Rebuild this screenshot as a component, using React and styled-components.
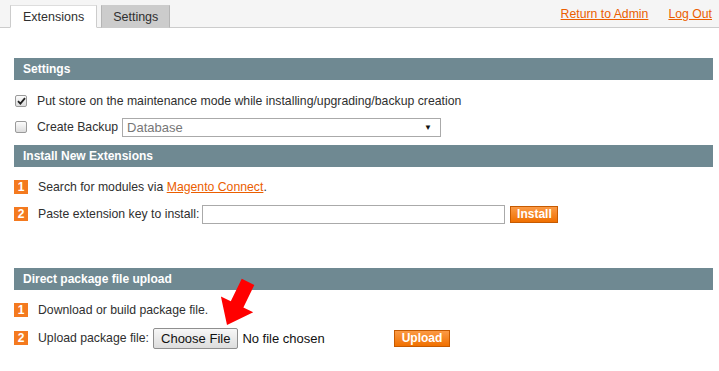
import React from "react";
import styled, { createGlobalStyle } from "styled-components";

const colors = {
  text: "#2f2f2f",
  link: "#eb5e00",
  header: "#6f8992",
  badge: "#f47a1f",
  border: "#aaaaaa",
};

const GlobalStyle = createGlobalStyle`
  body {
    margin: 0;
    background: #ffffff;
    font-family: "Liberation Sans", Arial, sans-serif;
    font-size: 12.25px;
    color: ${colors.text};
  }
`;

function App() {
  return (
    <Page>
      <GlobalStyle />
      <TopBar>
        <Tabs>
          <Tab $active>Extensions</Tab>
          <Tab>Settings</Tab>
        </Tabs>
        <TopLinks>
          <Link href="#">Return to Admin</Link>
          <Link href="#">Log Out</Link>
        </TopLinks>
      </TopBar>

      <Content>
        <SectionHeader>Settings</SectionHeader>
        <SectionBody $top={11} $bottom={8} $gap={6}>
          <Row>
            <Checkbox $checked>
              <svg width="9" height="8" viewBox="0 0 9 8">
                <path d="M1 4.2 L3.4 6.6 L8 1.2" fill="none" stroke="#222" strokeWidth="1.8" />
              </svg>
            </Checkbox>
            Put store on the maintenance mode while installing/upgrading/backup creation
          </Row>
          <Row>
            <Checkbox />
            Create Backup
            <Select>
              <span>Database</span>
              <SelectArrow>▼</SelectArrow>
            </Select>
          </Row>
        </SectionBody>

        <SectionHeader>Install New Extensions</SectionHeader>
        <SectionBody $top={10} $bottom={44} $gap={7}>
          <Row>
            <Badge>1</Badge>
            Search for modules via&nbsp;<Link href="#">Magento Connect</Link>.
          </Row>
          <Row>
            <Badge>2</Badge>
            Paste extension key to install:
            <TextInput />
            <OrangeButton $width={48}>Install</OrangeButton>
          </Row>
        </SectionBody>

        <SectionHeader>Direct package file upload</SectionHeader>
        <SectionBody $top={10} $bottom={20} $gap={8}>
          <Row>
            <Badge>1</Badge>
            Download or build package file.
          </Row>
          <Row>
            <Badge>2</Badge>
            Upload package file:
            <FileField>
              <FileButton>Choose File</FileButton>
              <FileName>No file chosen</FileName>
            </FileField>
            <OrangeButton $width={56}>Upload</OrangeButton>
          </Row>
        </SectionBody>
      </Content>

      <Arrow width="60" height="60" viewBox="0 0 60 60">
        <g transform="translate(35.85 11.35) rotate(26)">
          <polygon points="-7,-5 7,-5 7,20 18,20 0,43 -18,20 -7,20" fill="#ff0000" />
        </g>
      </Arrow>
    </Page>
  );
}

const Page = styled.div`
  position: relative;
  width: 719px;
  min-height: 371px;
`;

const TopBar = styled.div`
  display: flex;
  justify-content: space-between;
  height: 27px;
  padding: 0 7px 0 10px;
  background: #f5f5f5;
  border-bottom: 1px solid #cccccc;
`;

const Tabs = styled.div`
  display: flex;
  align-items: flex-end;
  gap: 4px;
  margin-bottom: -1px;
`;

const Tab = styled.div`
  box-sizing: border-box;
  height: 23px;
  line-height: 22px;
  padding: 0 ${(p) => (p.$active ? 12 : 11)}px;
  font-size: 12.5px;
  color: ${colors.text};
  background: ${(p) => (p.$active ? "#ffffff" : "#cccccc")};
  border: 1px solid ${(p) => (p.$active ? "#cccccc" : "#b5b5b5")};
  border-bottom-color: ${(p) => (p.$active ? "#ffffff" : "#cccccc")};
  border-top-color: ${(p) => (p.$active ? "#dddddd" : "#cccccc")};
`;

const TopLinks = styled.div`
  display: flex;
  align-items: center;
  gap: 20px;
`;

const Link = styled.a`
  color: ${colors.link};
  text-decoration: underline;
`;

const Content = styled.div`
  padding: 30px 6px 0 14px;
`;

const SectionHeader = styled.div`
  height: 22px;
  line-height: 22px;
  padding-left: 9px;
  background: ${colors.header};
  color: #ffffff;
  font-weight: bold;
  font-size: 12px;
`;

const SectionBody = styled.div`
  display: flex;
  flex-direction: column;
  gap: ${(p) => p.$gap}px;
  padding: ${(p) => p.$top}px 0 ${(p) => p.$bottom}px 0;
`;

const Row = styled.div`
  display: flex;
  align-items: center;
  height: 20px;
  white-space: nowrap;
`;

const Checkbox = styled.span`
  box-sizing: border-box;
  display: flex;
  align-items: center;
  justify-content: center;
  width: 12px;
  height: 12px;
  margin: 0 10px 0 1px;
  border: 1px solid #9a9a9a;
  border-radius: 2px;
  background: linear-gradient(#fcfcfc, #dcdcdc);
`;

const Select = styled.div`
  box-sizing: border-box;
  display: flex;
  align-items: center;
  justify-content: space-between;
  width: 319px;
  height: 19px;
  margin-left: 4px;
  padding: 0 8px 0 4px;
  border: 1px solid ${colors.border};
  color: #777777;
  font-size: 13px;
`;

const SelectArrow = styled.span`
  color: #111111;
  font-size: 8px;
`;

const Badge = styled.span`
  display: flex;
  align-items: center;
  justify-content: center;
  width: 14px;
  height: 14px;
  margin-right: 10px;
  background: ${colors.badge};
  color: #ffffff;
  font-weight: bold;
  font-size: 12px;
`;

const TextInput = styled.input`
  box-sizing: border-box;
  width: 303px;
  height: 19px;
  margin: 0 0 0 3px;
  border: 1px solid ${colors.border};
  padding: 0 3px;
`;

const OrangeButton = styled.button`
  box-sizing: border-box;
  width: ${(p) => p.$width}px;
  height: 17px;
  margin-left: 5px;
  padding: 0;
  border: 1px solid #c65a00;
  background: linear-gradient(#fb9a45, #f07000);
  color: #ffffff;
  font-family: "Liberation Sans", Arial, sans-serif;
  font-weight: bold;
  font-size: 12px;
  line-height: 15px;
`;

const FileField = styled.div`
  display: flex;
  align-items: center;
  width: 236px;
  margin-left: 4px;
`;

const FileButton = styled.button`
  box-sizing: border-box;
  height: 21px;
  padding: 0 7px;
  border: 1px solid #8f8f8f;
  border-radius: 2px;
  background: linear-gradient(#f7f7f7, #dddddd);
  color: #111111;
  font-family: "Liberation Sans", Arial, sans-serif;
  font-size: 13px;
`;

const FileName = styled.span`
  margin-left: 4px;
  color: #111111;
  font-size: 13px;
`;

const Arrow = styled.svg`
  position: absolute;
  left: 210px;
  top: 275px;
`;

export default App;
